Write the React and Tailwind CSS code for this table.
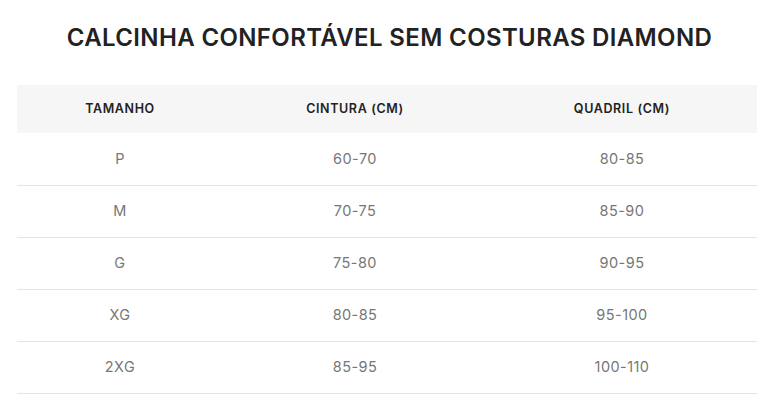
const rows = [
  ['P', '60-70', '80-85'],
  ['M', '70-75', '85-90'],
  ['G', '75-80', '90-95'],
  ['XG', '80-85', '95-100'],
  ['2XG', '85-95', '100-110'],
]

export default function App() {
  return (
    <div className="min-h-screen bg-white px-[17px] pt-[22px] font-['Inter',sans-serif]">
      <h1 className="text-center text-[24px] leading-[32px] font-semibold tracking-[0.015em] text-[#222]">
        CALCINHA CONFORTÁVEL SEM COSTURAS DIAMOND
      </h1>
      <table className="mt-[31px] w-[740px] border-collapse table-fixed">
        <colgroup>
          <col className="w-[206px]" />
          <col className="w-[264px]" />
          <col className="w-[270px]" />
        </colgroup>
        <thead>
          <tr className="bg-[#f6f6f6]">
            <th className="h-[48px] text-center text-[12.5px] font-semibold tracking-[0.05em] text-[#222]">TAMANHO</th>
            <th className="h-[48px] text-center text-[12.5px] font-semibold tracking-[0.05em] text-[#222]">CINTURA (CM)</th>
            <th className="h-[48px] text-center text-[12.5px] font-semibold tracking-[0.05em] text-[#222]">QUADRIL (CM)</th>
          </tr>
        </thead>
        <tbody>
          {rows.map((r, i) => (
            <tr key={i} className="border-b border-[#e5e5e5]">
              {r.map((c, j) => (
                <td key={j} className="h-[52px] text-center text-[14.5px] tracking-[0.03em] text-[#777]">{c}</td>
              ))}
            </tr>
          ))}
        </tbody>
      </table>
    </div>
  )
}
